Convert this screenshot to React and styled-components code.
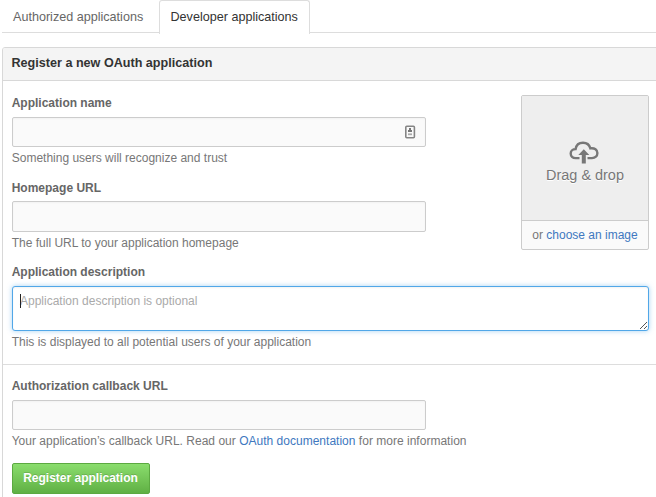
import React from "react";
import styled, { createGlobalStyle } from "styled-components";

const GlobalStyle = createGlobalStyle`
  * { box-sizing: border-box; }
  html, body { margin: 0; background: #fff; overflow: hidden; }
  body { font: 12px/16px "Liberation Sans", Arial, sans-serif; color: #666; }
`;

const Page = styled.div`
  width: 656px;
  height: 497px;
  padding-left: 2px;
  overflow: hidden;
`;

const Tabs = styled.nav`
  display: flex;
  height: 33px;
  border-bottom: 1px solid #ddd;
`;

const Tab = styled.a`
  height: ${(p) => (p.$active ? 34 : 32)}px;
  width: ${(p) => (p.$active ? 151 : 157)}px;
  padding: ${(p) => (p.$active ? "8px 0 0 10.5px" : "9px 0 0 11px")};
  border: ${(p) => (p.$active ? "1px solid #ddd" : "0")};
  border-bottom: 0;
  border-radius: 3px 3px 0 0;
  background: #fff;
  color: ${(p) => (p.$active ? "#333" : "#666")};
  font-size: 12.6px;
  white-space: nowrap;
`;

const Panel = styled.section`
  width: 660px;
  height: 470px;
  margin-top: 14px;
  border: 1px solid #d8d8d8;
  border-radius: 3px;
`;

const PanelHeader = styled.h1`
  height: 33px;
  margin: 0;
  padding: 7px 8.5px 0;
  border-bottom: 1px solid #d8d8d8;
  border-radius: 2px 2px 0 0;
  background: #f4f4f4;
  color: #333;
  font-size: 12.6px;
  line-height: 16px;
`;

const Section = styled.div`
  height: ${(p) => p.$height}px;
  padding: ${(p) => (p.$divided ? 14 : 13)}px 0 0 9px;
  border-bottom: ${(p) => (p.$divided ? "1px solid #ddd" : "0")};
`;

const Columns = styled.div`
  display: flex;
  justify-content: space-between;
  width: 637px;
  height: 169px;
`;

const Field = styled.div`
  height: ${(p) => p.$height}px;
`;

const Label = styled.label`
  display: block;
  height: ${(p) => p.$height || 22}px;
  font-weight: bold;
  margin-left: -0.3px;
`;

const InputFrame = styled.div`
  display: flex;
  align-items: center;
  justify-content: flex-end;
  width: 414px;
  height: ${(p) => p.$height || 30}px;
  padding-right: 9px;
  border: 1px solid #ccc;
  border-radius: 2px;
  background: #fafafa;
  box-shadow: inset 0 1px 2px rgba(0, 0, 0, 0.035);
`;

const TextInput = styled.input`
  flex: 1;
  min-width: 0;
  padding: 0 7px;
  border: 0;
  outline: 0;
  background: transparent;
  font: inherit;
`;

const Note = styled.p`
  margin: 3px 0 0 -0.3px;
  color: #777;
  white-space: nowrap;
  letter-spacing: ${(p) => (p.$wide ? "0.015px" : "normal")};
`;

const Link = styled.a`
  color: #4078c0;
`;

const AreaWrap = styled.div`
  position: relative;
  width: 637px;
  height: 45px;
`;

const TextArea = styled.textarea`
  display: block;
  width: 100%;
  height: 100%;
  padding: 6px 7px;
  border: 1px solid #51a7e8;
  border-radius: 3px;
  outline: 0;
  resize: none;
  overflow: hidden;
  background: #fff;
  box-shadow: inset 0 1px 2px rgba(0, 0, 0, 0.05), 0 0 5px rgba(81, 167, 232, 0.5);
  font: inherit;
  &::placeholder { color: #aaa; opacity: 1; }
`;

const Caret = styled.span`
  position: absolute;
  left: 8px;
  top: 8px;
  width: 1px;
  height: 14px;
  background: #222;
`;

const Grip = styled.svg`
  position: absolute;
  right: 1px;
  bottom: 1px;
`;

const Uploader = styled.div`
  width: 128px;
  height: 155px;
  border: 1px solid #ccc;
  border-radius: 2px;
  background: #fafafa;
  text-align: center;
`;

const DropZone = styled.div`
  height: 125px;
  padding-top: 45px;
  border-bottom: 1px solid #ccc;
  border-radius: 1px 1px 0 0;
  background: #eee;
  color: #777;
  font-size: 14.45px;
  line-height: 18px;
  text-shadow: 0 1px 0 #fff;
  svg { display: block; margin: 0 auto 2px 47px; }
`;

const Choose = styled.div`
  padding-top: 6px;
  color: #777;
`;

const SubmitButton = styled.button`
  display: block;
  width: 138px;
  height: 31px;
  margin: 14px 0 0;
  padding: 0 1px 1px 0;
  border: 1px solid #5ca941;
  border-radius: 2px;
  background: linear-gradient(#8add6d, #60b044);
  color: #fff;
  font: bold 12px/16px "Liberation Sans", Arial, sans-serif;
  text-shadow: 0 -1px 0 rgba(0, 0, 0, 0.15);
  white-space: nowrap;
`;

function ContactIcon() {
  return (
    <svg width="12" height="14" viewBox="0 0 12 14">
      <rect x="1.8" y="1.2" width="8.6" height="11.6" rx="1" fill="#fafafa" stroke="#858585" strokeWidth="1.6" />
      <path d="M5 3h2v2h1v2H4V5h1z" fill="#777" />
      <path d="M4 8.4h4v1.8H4z" fill="#aaa" />
    </svg>
  );
}

function CloudUpload() {
  return (
    <svg width="30" height="23" viewBox="0 0 30 23" fill="none">
      <path
        d="M10.5 17.1H6.7C3.6 17.1 1.7 15.1 1.7 12.5C1.7 9.8 3.7 8.1 6.6 8.1C7.2 4.2 10.1 1.7 14 1.7C17.7 1.7 20.4 3.8 21.4 7.3C25.7 6.7 28.4 9 28.4 12.1C28.4 15.1 26.2 17.1 23 17.1H18.5"
        stroke="#777"
        strokeWidth="2.4"
      />
      <path d="M14.8 8.2L20.3 14H16.8V22.5H12.8V14H9.3Z" fill="#777" />
    </svg>
  );
}

export default function App() {
  return (
    <>
      <GlobalStyle />
      <Page>
        <Tabs>
          <Tab>Authorized applications</Tab>
          <Tab $active>Developer applications</Tab>
        </Tabs>
        <Panel>
          <PanelHeader>Register a new OAuth application</PanelHeader>
          <Section $height={284} $divided>
            <Columns>
              <div>
                <Field $height={85}>
                  <Label>Application name</Label>
                  <InputFrame>
                    <TextInput />
                    <ContactIcon />
                  </InputFrame>
                  <Note>Something users will recognize and trust</Note>
                </Field>
                <Field $height={84}>
                  <Label $height={21}>Homepage URL</Label>
                  <InputFrame $height={31}>
                    <TextInput />
                  </InputFrame>
                  <Note>The full URL to your application homepage</Note>
                </Field>
              </div>
              <Uploader>
                <DropZone>
                  <CloudUpload />
                  Drag &amp; drop
                </DropZone>
                <Choose>
                  or <Link>choose an image</Link>
                </Choose>
              </Uploader>
            </Columns>
            <Label>Application description</Label>
            <AreaWrap>
              <TextArea placeholder="Application description is optional" />
              <Caret />
              <Grip width="9" height="9" viewBox="0 0 9 9">
                <path d="M1 8L8 1M5 8L8 5" stroke="#555" strokeWidth="1" />
              </Grip>
            </AreaWrap>
            <Note>This is displayed to all potential users of your application</Note>
          </Section>
          <Section $height={140}>
            <Label>Authorization callback URL</Label>
            <InputFrame>
              <TextInput />
            </InputFrame>
            <Note $wide>
              Your application’s callback URL. Read our <Link>OAuth documentation</Link> for more information
            </Note>
            <SubmitButton>Register application</SubmitButton>
          </Section>
        </Panel>
      </Page>
    </>
  );
}
